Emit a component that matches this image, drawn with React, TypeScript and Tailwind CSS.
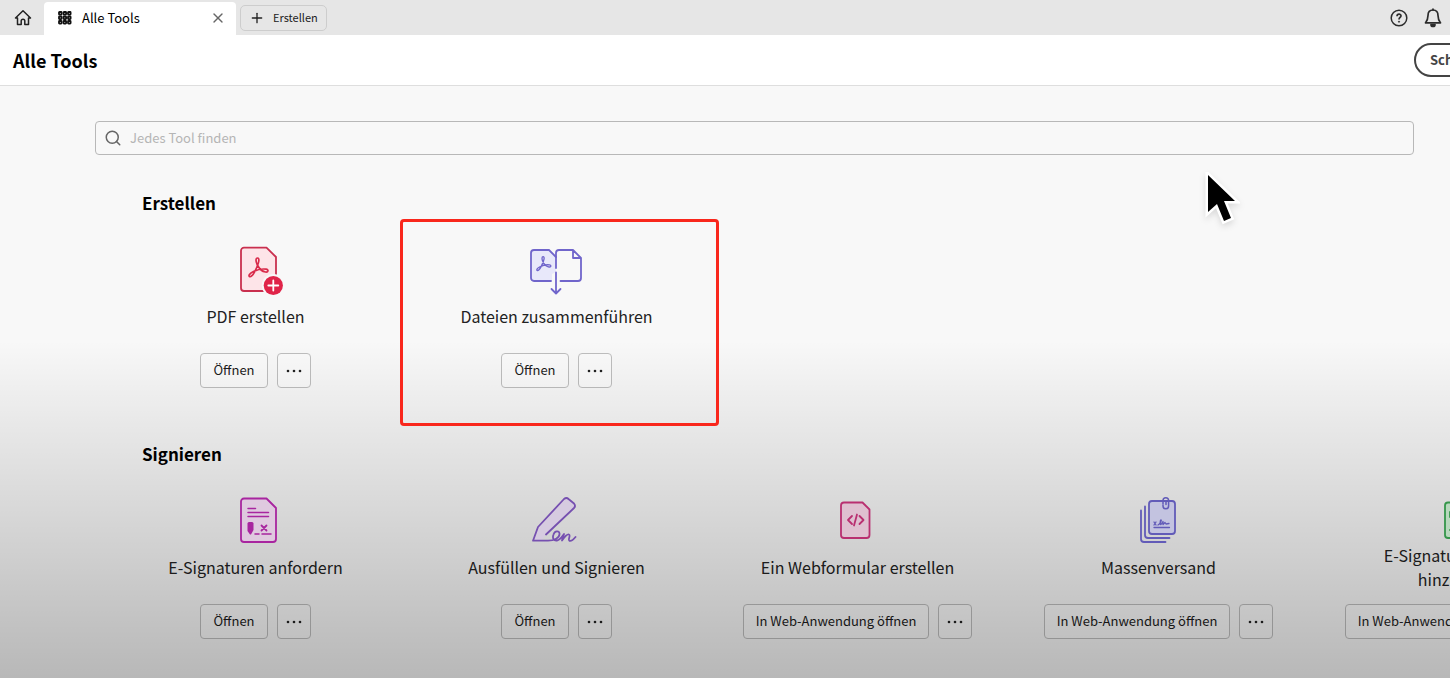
import type { ReactNode } from 'react';
import { Plus, Search, X } from 'lucide-react';

interface Tool {
  name: string;
  action: string;
  icon: ReactNode;
  highlighted?: boolean;
}

const ACROBAT_PATH =
  'M26.500 13c-2 0-1.800 3.400-.4 6.500 1.800 3.600 5 7 8.400 7.500 3 .4 3.400-2.400.6-2.800-4-.6-9.500.8-13.500 2.800-2.800 1.400-4.400 3.800-3.200 4.600 1.400.8 3.600-1.600 5.200-4.800 2-3.800 3.800-7.800 4.200-10.800C28 14 27.600 13 26.500 13Z';

function ToolIcon({ children }: { children: ReactNode }) {
  return (
    <svg
      viewBox="0 0 54 48"
      className="relative z-20 h-12 w-[54px] overflow-visible"
      fill="none"
      strokeWidth="1.8"
      strokeLinecap="round"
      strokeLinejoin="round"
      aria-hidden="true"
    >
      {children}
    </svg>
  );
}

function CreatePdfIcon() {
  return (
    <ToolIcon>
      <path d="M15 2.700h22.500L47 12v31a3 3 0 0 1-3 3H15a3 3 0 0 1-3-3V5.700a3 3 0 0 1 3-3Z" fill="#fde4e8" stroke="#c9304f" />
      <path d={ACROBAT_PATH} transform="translate(2 0)" stroke="#d92b4b" strokeWidth="1.700" />
      <circle cx="44.300" cy="40.500" r="11.500" fill="#f8f8f8" />
      <circle cx="44.300" cy="40.500" r="9.600" fill="#e02449" />
      <path d="M44.300 35.500v10M39.300 40.500h10" stroke="#fff" strokeWidth="1.800" />
    </ToolIcon>
  );
}

function CombineIcon() {
  return (
    <ToolIcon>
      <path d="M22 36H4a3 3 0 0 1-3-3V8a3 3 0 0 1 3-3h15l7 7v15l-4 2Z" fill="#e8e8fa" />
      <path d="M21 36H4a3 3 0 0 1-3-3V8a3 3 0 0 1 3-3h15l7 7" stroke="#7065cb" />
      <path d="M26 23V8a3 3 0 0 1 3-3h14l8 8v20a3 3 0 0 1-3 3H30.500M43 5v8h8" stroke="#7065cb" />
      <path d="M26 27.500v20.500M21.500 44l4.500 4.500 4.500-4.500" stroke="#7065cb" />
      <path d={ACROBAT_PATH} transform="translate(-6.500 2) scale(.74)" stroke="#7065cb" />
    </ToolIcon>
  );
}

function RequestSignatureIcon() {
  return (
    <ToolIcon>
      <path d="M15 2.500h22.500l9.500 9.500v31a3 3 0 0 1-3 3H15a3 3 0 0 1-3-3V5.500a3 3 0 0 1 3-3Z" fill="#dfc9df" stroke="#a8259f" />
      <path d="M19 12.500h7.500M19 16.500h20.500M19 20.500h20.500M26 38h4M33 38h9" stroke="#a8259f" strokeWidth="1.500" />
      <path d="m32.500 29.500 5 5m0-5-5 5" stroke="#a8259f" strokeWidth="1.800" />
      <path d="M18.500 27.500q0-1.500 1.500-1.500h3q1.500 0 1.500 1.500V34l-2.500 4.500h-1L18.500 35Z" fill="#a8259f" />
    </ToolIcon>
  );
}

function FillSignIcon() {
  return (
    <ToolIcon>
      <path d="M3 44.700 8 31 34 3q2.500-2 4.500 0L44 7.500q2 2.500 0 4.500L16 38.500 11 45Z" fill="#d6cbe0" />
      <path
        d="M16 38.500 44 12q2-2 0-4.500L38.500 3Q36.500 1 34 3L8 31 3 44.700h15c6 0 12-3 11.500-7.200-.4-3-4.700-3-6 1-1.500 4 .5 6.500 3.500 6 3.500-.6 5-4 7-6.500-.6 2-1.500 4-2 6.500 2.500-3.500 5.500-6.500 7-6 2 .6-1.500 5.500.5 6.300 2 .5 4-1.300 6-3.800"
        stroke="#7650b0"
      />
    </ToolIcon>
  );
}

function WebFormIcon() {
  return (
    <ToolIcon>
      <path d="M13 6.500h18.500l7 7V39a3 3 0 0 1-3 3H13a3 3 0 0 1-3-3V9.500a3 3 0 0 1 3-3Z" fill="#dfc0d0" stroke="#b92f70" />
      <path d="m21 20-4 4 4 4M28.500 20l4 4-4 4M26 18.500l-3 11" stroke="#b92f70" />
    </ToolIcon>
  );
}

function BulkSendIcon() {
  return (
    <ToolIcon>
      <path d="M9 14.500V43a3 3 0 0 0 3 3h21.500M13 10.500V39a3 3 0 0 0 3 3h21.500" stroke="#625bb8" />
      <rect x="17" y="5" width="26" height="33" rx="3" fill="#c3c3e0" stroke="#625bb8" />
      <path d="M31 8V4.500a2.800 2.800 0 0 1 5.600 0V10a2.800 2.800 0 0 1-5.600 0V9M34 8.500V6" stroke="#625bb8" strokeWidth="1.500" />
      <path d="m22 26 2 3m0-3-2 3m4 0c2-1 4-5 3-5s-1 5 0 4.500l2-3v3l2-2 1 1.500 3-.5M22 31.500h15.500" stroke="#625bb8" strokeWidth="1.300" />
    </ToolIcon>
  );
}

function BrandingIcon() {
  return (
    <ToolIcon>
      <path d="M15 6.500h19.500l7 7V39a3 3 0 0 1-3 3H15a3 3 0 0 1-3-3V9.500a3 3 0 0 1 3-3Z" fill="#b8d8bd" stroke="#35964a" />
      <path d="M17 16v5M17 18h10M17 34h18" stroke="#35964a" />
    </ToolIcon>
  );
}

const CREATE_TOOLS: Tool[] = [
  { name: 'PDF erstellen', action: 'Öffnen', icon: <CreatePdfIcon /> },
  { name: 'Dateien zusammenführen', action: 'Öffnen', icon: <CombineIcon />, highlighted: true },
];

const SIGN_TOOLS: Tool[] = [
  { name: 'E-Signaturen anfordern', action: 'Öffnen', icon: <RequestSignatureIcon /> },
  { name: 'Ausfüllen und Signieren', action: 'Öffnen', icon: <FillSignIcon /> },
  { name: 'Ein Webformular erstellen', action: 'In Web-Anwendung öffnen', icon: <WebFormIcon /> },
  { name: 'Massenversand', action: 'In Web-Anwendung öffnen', icon: <BulkSendIcon /> },
  { name: 'E-Signatur-Branding hinzufügen', action: 'In Web-Anwendung öffnen', icon: <BrandingIcon /> },
];

function ToolCard({ tool }: { tool: Tool }) {
  return (
    <article className="relative flex flex-col items-center">
      {tool.icon}
      <h3 className="flex h-[46px] max-w-[210px] items-center text-center text-base leading-6 text-[#222]">
        {tool.name}
      </h3>
      <div className="mt-3.5 flex gap-[9px]">
        <button className="h-[35px] rounded border border-[#bebebe] bg-white/30 px-3 pb-0.5 text-[13px] whitespace-nowrap text-[#1c1c1c]">
          {tool.action}
        </button>
        <button
          aria-label="Weitere Optionen"
          className="flex h-[35px] w-[34px] items-center justify-center rounded border border-[#bebebe] bg-white/30"
        >
          <svg viewBox="0 0 16 4" className="h-1 w-4 fill-[#222]" aria-hidden="true">
            <circle cx="2" cy="2" r="1.300" />
            <circle cx="8" cy="2" r="1.300" />
            <circle cx="14" cy="2" r="1.300" />
          </svg>
        </button>
      </div>
      {/* Red frame around the tool that is being explained */}
      {tool.highlighted && (
        <div className="pointer-events-none absolute -top-[26px] -right-3 -bottom-[38px] -left-1.5 z-20 rounded-sm border-3 border-[#f9271c]" />
      )}
    </article>
  );
}

function ToolSection({ title, tools }: { title: string; tools: Tool[] }) {
  return (
    <section>
      <h2 className="pl-[142px] text-[17px] leading-7 font-bold text-black">{title}</h2>
      <div className="mt-7 grid auto-cols-[301px] grid-flow-col pl-[105px]">
        {tools.map((tool) => (
          <ToolCard key={tool.name} tool={tool} />
        ))}
      </div>
    </section>
  );
}

function TabBar() {
  return (
    <nav className="flex h-[35px] items-center bg-[#e6e6e6] pr-2">
      <button aria-label="Startseite" className="flex w-11 justify-center pl-0.5">
        <svg viewBox="0 0 18 18" className="size-[18px]" fill="none" stroke="#222" strokeWidth="1.500" strokeLinejoin="round" strokeLinecap="round">
          <path d="M3.500 9H1.500L9 1.800 16.500 9h-2M3.500 9v6.500h3.700V12a1.800 1.800 0 0 1 3.600 0v3.500h3.700V9" />
        </svg>
      </button>
      <div className="flex h-[33px] w-48 items-center self-end rounded-t bg-white px-3.5 pb-0.5 text-[13px] text-black">
        <svg viewBox="0 0 14 14" className="size-3.5" fill="none" stroke="#111" strokeWidth="1.800" aria-hidden="true">
          {[1, 5.5, 10].map((y) =>
            [1, 5.5, 10].map((x) => <rect key={`${x}-${y}`} x={x} y={y} width="2.600" height="2.600" rx=".5" />),
          )}
        </svg>
        <span className="ml-2.5 flex-1">Alle Tools</span>
        <button aria-label="Tab schließen" className="-mr-1">
          <X className="size-4 text-[#666]" strokeWidth={2} />
        </button>
      </div>
      <button className="ml-1 flex h-[26px] items-center gap-2 rounded-[5px] border border-[#cdcdcd] px-2 text-[11px] text-[#222]">
        <Plus className="size-4" strokeWidth={2} />
        Erstellen
      </button>
      <div className="ml-auto flex items-center gap-4">
        <button aria-label="Hilfe">
          <svg viewBox="0 0 18 18" className="size-[18px]" fill="none" stroke="#2c2c2c" strokeWidth="1.500">
            <circle cx="9" cy="9" r="7.800" />
            <path d="M7 7.200C7.200 4.500 11 4.700 11 6.800c0 1.600-2 1.700-2 3.600" strokeWidth="1.700" />
            <circle cx="9" cy="12.700" r=".6" fill="#2c2c2c" strokeWidth=".8" />
          </svg>
        </button>
        <button aria-label="Benachrichtigungen">
          <svg viewBox="0 0 18 20" className="h-5 w-[18px]" fill="none" stroke="#2c2c2c" strokeWidth="1.700" strokeLinejoin="round">
            <path d="M9 2C5.500 2 4 4.500 4 7.500c0 4-.8 5-2.500 7.300h15C14.800 12.500 14 11.500 14 7.500 14 4.500 12.500 2 9 2Z" />
            <path d="M7 16.500h4a2 2 0 0 1-4 0Z" fill="#2c2c2c" />
            <path d="M9 1v1" strokeLinecap="round" />
          </svg>
        </button>
      </div>
    </nav>
  );
}

export default function App() {
  return (
    <div className="relative flex min-h-screen flex-col overflow-hidden bg-[#f8f8f8] font-['Noto_Sans_CJK_SC',sans-serif]">
      <TabBar />
      <header className="flex h-[51px] items-center border-b border-[#dedede] bg-white pl-[13px]">
        <h1 className="flex-1 text-lg font-bold text-black">Alle Tools</h1>
        <button className="-mr-16 h-[34px] w-[100px] shrink-0 rounded-full border-2 border-[#444] pl-3.5 text-left text-[13px] font-bold whitespace-nowrap text-[#444]">
          Schließen
        </button>
      </header>

      <main className="flex flex-1 flex-col pt-[35px] pb-10">
        <label className="mr-9 ml-[95px] flex h-[34px] items-center gap-2 rounded border border-[#b8b8b8] px-2">
          <Search className="size-[18px] text-[#666]" strokeWidth={2} />
          <input
            type="search"
            aria-label="Jedes Tool finden"
            placeholder="Jedes Tool finden"
            className="min-w-0 flex-1 bg-transparent text-[13px] outline-none placeholder:text-[#b5b5b5]"
          />
        </label>
        <div className="mt-[34px] flex flex-col gap-[52px]">
          <ToolSection title="Erstellen" tools={CREATE_TOOLS} />
          <ToolSection title="Signieren" tools={SIGN_TOOLS} />
        </div>
      </main>

      {/* Darkening shade over the lower half of the page */}
      <div className="pointer-events-none absolute inset-x-0 bottom-0 z-10 h-1/2 bg-linear-to-b from-black/0 to-black/26" />

      {/* Mouse pointer */}
      <svg
        viewBox="0 0 36 54"
        className="pointer-events-none absolute top-[172px] left-[1204px] z-20 h-[54px] w-9 drop-shadow-md"
        aria-hidden="true"
      >
        <path d="M4 3v37l9-8 7 17 7-3-7-17h11Z" fill="#000" stroke="#fff" strokeWidth="5" paintOrder="stroke" />
      </svg>
    </div>
  );
}
